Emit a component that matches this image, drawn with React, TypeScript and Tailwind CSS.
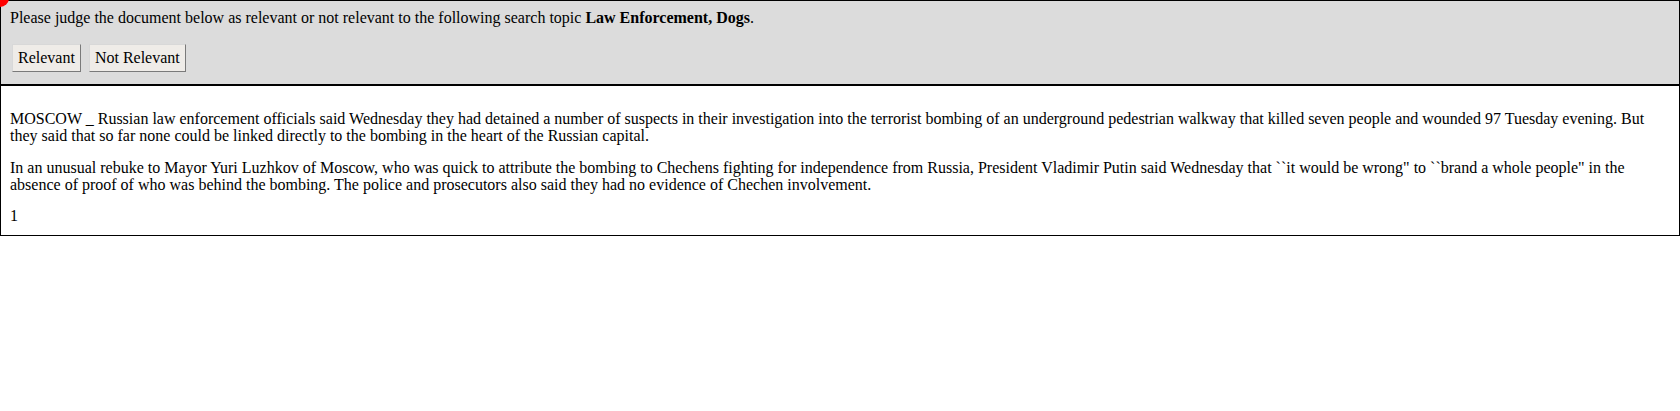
const TOPIC = 'Law Enforcement, Dogs';

const PARAGRAPHS = [
  'MOSCOW _ Russian law enforcement officials said Wednesday they had detained a number of suspects in their investigation into the terrorist bombing of an underground pedestrian walkway that killed seven people and wounded 97 Tuesday evening. But they said that so far none could be linked directly to the bombing in the heart of the Russian capital.',
  'In an unusual rebuke to Mayor Yuri Luzhkov of Moscow, who was quick to attribute the bombing to Chechens fighting for independence from Russia, President Vladimir Putin said Wednesday that ``it would be wrong" to ``brand a whole people" in the absence of proof of who was behind the bombing. The police and prosecutors also said they had no evidence of Chechen involvement.',
];

function JudgeButton({ label }: { label: string }) {
  return (
    <button
      type="button"
      className="h-[28px] px-[5px] bg-[#efece8] border border-t-[#d8d8d8] border-l-[#d8d8d8] border-r-[#7a7a7a] border-b-[#7a7a7a] text-[16px] leading-none text-black"
    >
      {label}
    </button>
  );
}

export default function App() {
  return (
    <div className="relative w-[1680px] font-['Liberation_Serif',serif] text-[16px] text-black">
      {/* red status dot in the corner */}
      <div className="absolute left-[-9px] top-[-11px] w-[18px] h-[18px] rounded-full bg-[#ff0000]" />

      {/* Judgement panel */}
      <div className="border border-black bg-[#dcdcdc] px-[9px] pt-[8px] pb-[12px]">
        <p className="leading-[18px]">
          Please judge the document below as relevant or not relevant to the following search topic{' '}
          <b>{TOPIC}</b>.
        </p>
        <div className="mt-[17px] flex gap-[8px] pl-[2px]">
          <JudgeButton label="Relevant" />
          <JudgeButton label="Not Relevant" />
        </div>
      </div>

      {/* Document */}
      <div className="border border-black px-[9px] pt-[8px] pb-[11px]">
        <p className="mt-[16px] leading-[17px]">{PARAGRAPHS[0]}</p>
        <p className="mt-[15px] leading-[17px]">{PARAGRAPHS[1]}</p>
        <p className="mt-[14px] leading-[17px]">1</p>
      </div>
    </div>
  );
}
